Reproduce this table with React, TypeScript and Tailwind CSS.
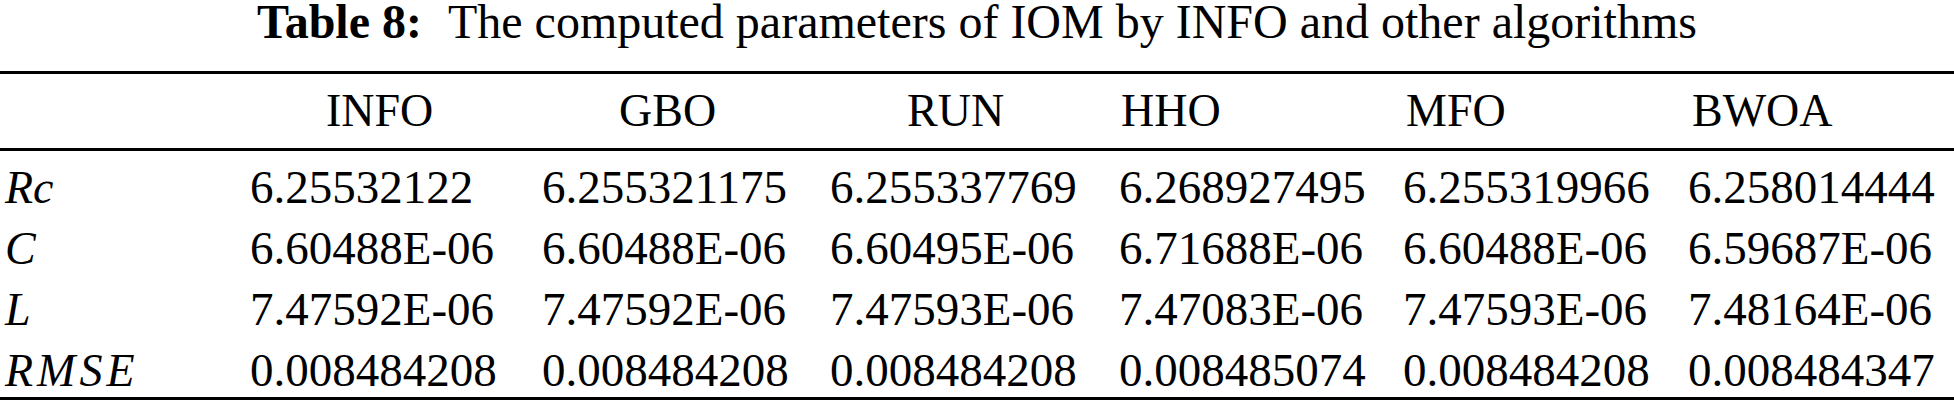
import React from "react";

const headers = [
  { name: "INFO", pad: "pl-[77px]" },
  { name: "GBO", pad: "pl-[78px]" },
  { name: "RUN", pad: "pl-[78px]" },
  { name: "HHO", pad: "pl-[3px]" },
  { name: "MFO", pad: "pl-[4px]" },
  { name: "BWOA", pad: "pl-[5px]" },
];

const rows: { label: string; track: string; values: string[] }[] = [
  {
    label: "Rc",
    track: "",
    values: ["6.25532122", "6.255321175", "6.255337769", "6.268927495", "6.255319966", "6.258014444"],
  },
  {
    label: "C",
    track: "",
    values: ["6.60488E-06", "6.60488E-06", "6.60495E-06", "6.71688E-06", "6.60488E-06", "6.59687E-06"],
  },
  {
    label: "L",
    track: "",
    values: ["7.47592E-06", "7.47592E-06", "7.47593E-06", "7.47083E-06", "7.47593E-06", "7.48164E-06"],
  },
  {
    label: "RMSE",
    track: "tracking-[4px]",
    values: ["0.008484208", "0.008484208", "0.008484208", "0.008485074", "0.008484208", "0.008484347"],
  },
];

const grid = "grid grid-cols-[249px_292px_288px_289px_284px_285px_1fr]";

export default function App() {
  return (
    <div className="w-[1954px] h-[412px] bg-white text-black [font-family:'Liberation_Serif','Times_New_Roman',serif] overflow-hidden">
      <div className="h-[71px] flex justify-center text-[48px] leading-[44px] whitespace-nowrap">
        <span className="font-bold">Table 8:</span>
        <span className="ml-[26px]">The computed parameters of IOM by INFO and other algorithms</span>
      </div>
      <div className="border-t-[3px] border-black" />
      <div className={`${grid} h-[74px] text-[46px] leading-[74px] whitespace-nowrap`}>
        <div />
        {headers.map((h) => (
          <div key={h.name} className={h.pad}>
            {h.name}
          </div>
        ))}
      </div>
      <div className="border-t-[3px] border-black" />
      <div className="pt-[6px] text-[47px] whitespace-nowrap">
        {rows.map((r, i) => (
          <div
            key={r.label}
            className={`${grid} ${i === 3 ? "h-[57px]" : "h-[61px]"} leading-[61px]`}
          >
            <div className={`pl-[5px] italic text-[46px] ${r.track}`}>{r.label}</div>
            {r.values.map((v, j) => (
              <div key={j} className="pl-[1px]">
                {v}
              </div>
            ))}
          </div>
        ))}
      </div>
      <div className="border-t-[3px] border-black" />
    </div>
  );
}
